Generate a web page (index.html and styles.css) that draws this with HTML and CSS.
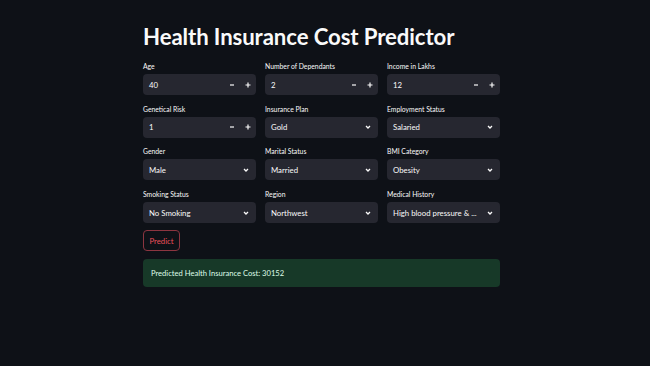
FILE: index.html
```html
<!DOCTYPE html>
<html>
<head>
<meta charset="utf-8">
<link rel="stylesheet" href="styles.css">
</head>
<body>
<main class="app">
  <h1 class="title">Health Insurance Cost Predictor</h1>
  <div class="form-grid">
    <div class="field">
      <label class="label">Age</label>
      <div class="input number">
        <span class="value">40</span>
        <span class="step"><svg width="6" height="6" viewBox="0 0 6 6"><path d="M1 3H5" stroke="#fafafa" stroke-width="1.2"/></svg></span>
        <span class="step"><svg width="6" height="6" viewBox="0 0 6 6"><path d="M0.5 3H5.5M3 0.5V5.5" stroke="#fafafa" stroke-width="1.2"/></svg></span>
      </div>
    </div>
    <div class="field">
      <label class="label">Number of Dependants</label>
      <div class="input number">
        <span class="value">2</span>
        <span class="step"><svg width="6" height="6" viewBox="0 0 6 6"><path d="M1 3H5" stroke="#fafafa" stroke-width="1.2"/></svg></span>
        <span class="step"><svg width="6" height="6" viewBox="0 0 6 6"><path d="M0.5 3H5.5M3 0.5V5.5" stroke="#fafafa" stroke-width="1.2"/></svg></span>
      </div>
    </div>
    <div class="field">
      <label class="label">Income in Lakhs</label>
      <div class="input number">
        <span class="value">12</span>
        <span class="step"><svg width="6" height="6" viewBox="0 0 6 6"><path d="M1 3H5" stroke="#fafafa" stroke-width="1.2"/></svg></span>
        <span class="step"><svg width="6" height="6" viewBox="0 0 6 6"><path d="M0.5 3H5.5M3 0.5V5.5" stroke="#fafafa" stroke-width="1.2"/></svg></span>
      </div>
    </div>

    <div class="field">
      <label class="label">Genetical Risk</label>
      <div class="input number">
        <span class="value">1</span>
        <span class="step"><svg width="6" height="6" viewBox="0 0 6 6"><path d="M1 3H5" stroke="#fafafa" stroke-width="1.2"/></svg></span>
        <span class="step"><svg width="6" height="6" viewBox="0 0 6 6"><path d="M0.5 3H5.5M3 0.5V5.5" stroke="#fafafa" stroke-width="1.2"/></svg></span>
      </div>
    </div>
    <div class="field">
      <label class="label">Insurance Plan</label>
      <div class="input select">
        <span class="value">Gold</span>
        <svg class="chev" width="8" height="8" viewBox="0 0 8 8"><path d="M2 3L4 5L6 3" fill="none" stroke="#fafafa" stroke-width="1.3"/></svg>
      </div>
    </div>
    <div class="field">
      <label class="label">Employment Status</label>
      <div class="input select">
        <span class="value">Salaried</span>
        <svg class="chev" width="8" height="8" viewBox="0 0 8 8"><path d="M2 3L4 5L6 3" fill="none" stroke="#fafafa" stroke-width="1.3"/></svg>
      </div>
    </div>

    <div class="field">
      <label class="label">Gender</label>
      <div class="input select">
        <span class="value">Male</span>
        <svg class="chev" width="8" height="8" viewBox="0 0 8 8"><path d="M2 3L4 5L6 3" fill="none" stroke="#fafafa" stroke-width="1.3"/></svg>
      </div>
    </div>
    <div class="field">
      <label class="label">Marital Status</label>
      <div class="input select">
        <span class="value">Married</span>
        <svg class="chev" width="8" height="8" viewBox="0 0 8 8"><path d="M2 3L4 5L6 3" fill="none" stroke="#fafafa" stroke-width="1.3"/></svg>
      </div>
    </div>
    <div class="field">
      <label class="label">BMI Category</label>
      <div class="input select">
        <span class="value">Obesity</span>
        <svg class="chev" width="8" height="8" viewBox="0 0 8 8"><path d="M2 3L4 5L6 3" fill="none" stroke="#fafafa" stroke-width="1.3"/></svg>
      </div>
    </div>

    <div class="field">
      <label class="label">Smoking Status</label>
      <div class="input select">
        <span class="value">No Smoking</span>
        <svg class="chev" width="8" height="8" viewBox="0 0 8 8"><path d="M2 3L4 5L6 3" fill="none" stroke="#fafafa" stroke-width="1.3"/></svg>
      </div>
    </div>
    <div class="field">
      <label class="label">Region</label>
      <div class="input select">
        <span class="value">Northwest</span>
        <svg class="chev" width="8" height="8" viewBox="0 0 8 8"><path d="M2 3L4 5L6 3" fill="none" stroke="#fafafa" stroke-width="1.3"/></svg>
      </div>
    </div>
    <div class="field">
      <label class="label">Medical History</label>
      <div class="input select">
        <span class="value">High blood pressure &amp; ...</span>
        <svg class="chev" width="8" height="8" viewBox="0 0 8 8"><path d="M2 3L4 5L6 3" fill="none" stroke="#fafafa" stroke-width="1.3"/></svg>
      </div>
    </div>
  </div>

  <button class="predict">Predict</button>

  <div class="result">Predicted Health Insurance Cost: 30152</div>
</main>
</body>
</html>
```

FILE: styles.css
```css
html, body {
  margin: 0;
  padding: 0;
  background: #0e1117;
  height: 100%;
}

body {
  font-family: Lato, "Noto Sans", sans-serif;
  color: #fafafa;
}

.app {
  width: 357px;
  padding: 24px 0 0 143px;
  display: flex;
  flex-direction: column;
}

.title {
  margin: 0;
  font-size: 22.2px;
  line-height: 26px;
  font-weight: 700;
  letter-spacing: -0.1px;
  height: 37px;
}

.form-grid {
  display: grid;
  grid-template-columns: repeat(3, 1fr);
  column-gap: 9px;
  row-gap: 8.7px;
}

.field {
  display: flex;
  flex-direction: column;
}

.label {
  font-size: 6.8px;
  line-height: 10px;
  height: 13px;
  color: #fafafa;
}

.input {
  height: 21px;
  background: #262730;
  border-radius: 4px;
  display: flex;
  align-items: center;
  font-size: 7.8px;
  box-sizing: border-box;
}

.value {
  flex: 1;
  padding-left: 6px;
  white-space: nowrap;
  overflow: hidden;
}

.step {
  width: 16px;
  height: 21px;
  display: flex;
  align-items: center;
  justify-content: center;
}

.select {
  padding-right: 6px;
}

.chev {
  flex: none;
}

.predict {
  align-self: flex-start;
  margin-top: 7px;
  width: 37px;
  height: 21px;
  padding: 0;
  background: transparent;
  border: 1px solid #8c3540;
  border-radius: 4px;
  color: #e8505a;
  font-family: Lato, "Noto Sans", sans-serif;
  font-size: 7.8px;
}

.result {
  margin-top: 8px;
  height: 28px;
  box-sizing: border-box;
  padding: 0 8px;
  display: flex;
  align-items: center;
  background: #173928;
  border-radius: 4px;
  color: #dffde9;
  font-size: 7.6px;
}
```
